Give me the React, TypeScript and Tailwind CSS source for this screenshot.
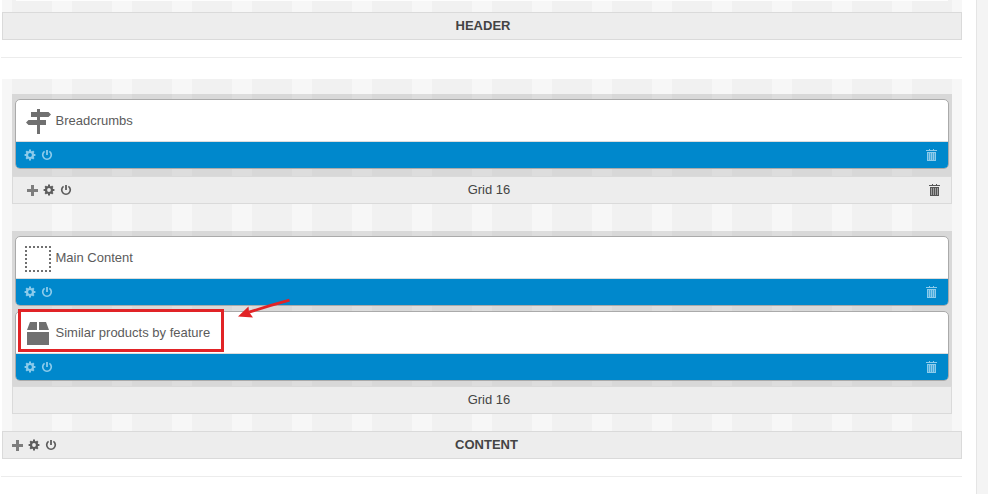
import React from "react";

const stripes =
  "bg-[repeating-linear-gradient(90deg,#f7f7f7_0px,#f7f7f7_10px,#f1f1f1_10px,#f1f1f1_50px,#f7f7f7_50px,#f7f7f7_60px)]";

function Gear() {
  return (
    <svg
      width="11"
      height="11"
      viewBox="0 0 11 11"
      fill="none"
      stroke="currentColor"
      className="block shrink-0 overflow-visible"
    >
      <circle cx="5" cy="5" r="3" strokeWidth="2.2" />
      <path
        d="M5 -0.4v2M5 8.4v2M-0.4 5h2M8.4 5h2M1.2 1.2l1.3 1.3M7.5 7.5l1.3 1.3M8.8 1.2L7.5 2.5M2.5 7.5L1.2 8.8"
        strokeWidth="2"
      />
    </svg>
  );
}

function Power() {
  return (
    <svg
      width="10"
      height="11"
      viewBox="0 0 10 11"
      fill="none"
      stroke="currentColor"
      className="block shrink-0 overflow-visible"
    >
      <path d="M2.6 1.4A4.3 4.3 0 1 0 7.4 1.4" strokeWidth="1.7" />
      <path d="M5 0V5" strokeWidth="1.8" />
    </svg>
  );
}

function Plus() {
  return (
    <svg width="11" height="11" viewBox="0 0 11 11" className="block shrink-0" fill="#7d7d7d">
      <path d="M4 0h3v4h4v3H7v4H4V7H0V4h4z" />
    </svg>
  );
}

function Trash() {
  return (
    <svg width="11" height="12" viewBox="0 0 11 12" className="block shrink-0" fill="currentColor">
      <path d="M3 0h1v1h3V0h1v1h3v1H0V1h3z" />
      <path d="M1 3h9v9H1z" opacity=".5" />
      <path d="M1 3h9v1H1zM1 11h9v1H1zM1 4h1v7H1zM3 4h1v7H3zM5 4h1v7H5zM7 4h1v7H7zM9 4h1v7H9z" />
    </svg>
  );
}

function Signpost() {
  return (
    <svg width="28" height="28" viewBox="0 0 28 28" className="block" fill="#707070">
      <path d="M13 2h3v25h-3zM7 5h17.5L27 7.5 24.5 10H7zM4.5 13H22v5H4.5L2 15.5z" />
    </svg>
  );
}

function DottedBox() {
  return (
    <svg width="28" height="28" viewBox="0 0 28 28" className="block" fill="none" stroke="#707070" strokeWidth="2">
      <path d="M1 3h26M1 27h26" strokeDasharray="2 2" />
      <path d="M2 2v26M26 2v26" strokeDasharray="2 2" />
    </svg>
  );
}

function Box() {
  return (
    <svg width="28" height="28" viewBox="0 0 28 28" className="block" fill="#707070">
      <path d="M3 13h22v13H3zM6 3h7v8H3zM15 3h7l3 8H15z" />
    </svg>
  );
}

function Block({ title, icon, marked }: { title: string; icon: React.ReactNode; marked?: boolean }) {
  return (
    <div className="relative h-[70px] rounded-[5px] border border-[#aaa] bg-white">
      <div className="flex h-[42px] items-start border-b border-[#dcdcdc] pt-[7px] pl-2 text-[#5b5b5b]">
        {icon}
        <span className="mt-[3.5px] ml-[3.5px] leading-5">{title}</span>
      </div>
      <div className="flex h-[26px] items-start rounded-b-[4px] bg-[#0088cc] pt-[7px] pr-[11px] pl-[9px] text-[#8ccbeb]">
        <span className="mt-px">
          <Gear />
        </span>
        <span className="mt-px ml-[6px]">
          <Power />
        </span>
        <span className="ml-auto">
          <Trash />
        </span>
      </div>
      {marked && (
        <>
          <div className="absolute -top-[3px] left-[2px] h-[43px] w-[206px] border-[3px] border-[#e12326]" />
          <svg width="56" height="24" viewBox="0 0 56 24" className="absolute -top-[15px] left-[222px]">
            <path d="M51.5 3.2L32 8.6L11 15.2" fill="none" stroke="#e12326" strokeWidth="2.8" />
            <path d="M0 19.5L10.5 9.5L11 15L15 20.5Z" fill="#e12326" />
          </svg>
        </>
      )}
    </div>
  );
}

function Bar({
  label,
  labelClass,
  toolsClass,
  trash,
}: {
  label: string;
  labelClass: string;
  toolsClass?: string;
  trash?: boolean;
}) {
  return (
    <div className="relative flex h-7 items-center justify-center border border-[#dadada] bg-[#ededed] text-[#444]">
      {toolsClass && (
        <div className={`absolute top-2 flex items-center gap-[6px] text-[#5c5c5c] ${toolsClass}`}>
          <Plus />
          <Gear />
          <Power />
        </div>
      )}
      <span className={`leading-5 ${labelClass}`}>{label}</span>
      {trash && (
        <div className="absolute top-[7px] right-[11px] text-[#555]">
          <Trash />
        </div>
      )}
    </div>
  );
}

export default function App() {
  return (
    <div className="flex h-[494px] w-[988px] overflow-hidden bg-white font-['Liberation_Sans',Arial,sans-serif] text-[13px]">
      <main className="flex w-[976px] flex-col pr-[14px] pl-[2px]">
        <div className={`h-3 px-[14px] ${stripes}`}>
          <div className="h-px bg-[#fdfdfd]" />
        </div>
        <Bar label="HEADER" labelClass="font-bold pl-[2px]" />
        <div className="mt-[17px] -ml-px h-px shrink-0 bg-[#ececec]" />
        <section className={`mt-[21px] px-[10px] pt-[15px] pb-[17px] ${stripes}`}>
          <div>
            <div className="bg-black/10 px-[3px] pt-[5px] pb-[7px]">
              <Block title="Breadcrumbs" icon={<Signpost />} />
            </div>
            <Bar label="Grid 16" labelClass="pl-[14px]" toolsClass="left-[14px]" trash />
          </div>
          <div className="mt-[27px]">
            <div className="flex flex-col gap-[5px] bg-black/10 px-[3px] py-[5px]">
              <Block title="Main Content" icon={<DottedBox />} />
              <Block title="Similar products by feature" icon={<Box />} marked />
            </div>
            <Bar label="Grid 16" labelClass="pl-[14px]" />
          </div>
        </section>
        <Bar label="CONTENT" labelClass="font-bold pl-[9px]" toolsClass="left-[9px]" />
        <div className="mt-[17px] -ml-px h-px shrink-0 bg-[#ececec]" />
      </main>
      <aside className="w-3 border-l border-[#e5e5e5] bg-[#f4f4f4]" />
    </div>
  );
}
